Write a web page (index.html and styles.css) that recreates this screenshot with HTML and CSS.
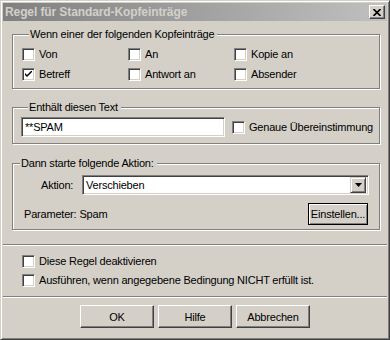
FILE: index.html
```html
<!DOCTYPE html>
<html lang="de">
<head>
<meta charset="utf-8">
<title>Regel für Standard-Kopfeinträge</title>
<link rel="stylesheet" href="styles.css">
</head>
<body>
<div class="window">
  <div class="titlebar">
    <span class="title">Regel für Standard-Kopfeinträge</span>
    <span class="close">
      <svg width="8" height="7" viewBox="0 0 8 7"><path d="M0.5 0 L7.5 7 M7.5 0 L0.5 7" stroke="#000" stroke-width="1.6" fill="none"/></svg>
    </span>
  </div>

  <fieldset class="group g1">
    <legend>Wenn einer der folgenden Kopfeinträge</legend>
    <div class="grid">
      <div class="check"><span class="box"></span>Von</div>
      <div class="check"><span class="box"></span>An</div>
      <div class="check"><span class="box"></span>Kopie an</div>
      <div class="check"><span class="box"><svg width="7" height="7" viewBox="0 0 7 7"><path d="M0 2 L0 4 L2 6 L7 1 L7 -1 L2 4 Z" fill="#000"/></svg></span>Betreff</div>
      <div class="check"><span class="box"></span>Antwort an</div>
      <div class="check"><span class="box"></span>Absender</div>
    </div>
  </fieldset>

  <fieldset class="group g2">
    <legend>Enthält diesen Text</legend>
    <div class="row">
      <div class="textbox">**SPAM</div>
      <div class="check"><span class="box"></span>Genaue Übereinstimmung</div>
    </div>
  </fieldset>

  <fieldset class="group g3">
    <legend>Dann starte folgende Aktion:</legend>
    <div class="row action">
      <span class="lbl-aktion">Aktion:</span>
      <div class="combo">
        <span class="combo-text">Verschieben</span>
        <span class="combo-btn"><svg width="7" height="4" viewBox="0 0 7 4"><path d="M0 0 H7 L3.5 4 Z" fill="#000"/></svg></span>
      </div>
    </div>
    <div class="row param">
      <span class="lbl-param">Parameter:</span>
      <span class="param-val">Spam</span>
      <span class="btn default">Einstellen...</span>
    </div>
  </fieldset>

  <div class="sep sep1"></div>

  <div class="options">
    <div class="check"><span class="box"></span>Diese Regel deaktivieren</div>
    <div class="check"><span class="box"></span>Ausführen, wenn angegebene Bedingung NICHT erfüllt ist.</div>
  </div>

  <div class="sep sep2"></div>

  <div class="buttons">
    <span class="btn">OK</span>
    <span class="btn">Hilfe</span>
    <span class="btn">Abbrechen</span>
  </div>
</div>
</body>
</html>
```

FILE: styles.css
```css
html, body {
  margin: 0;
  padding: 0;
  background: #d4d0c8;
}

.window {
  width: 390px;
  height: 340px;
  box-sizing: border-box;
  background: #d4d0c8;
  border: 1px solid;
  border-color: #d4d0c8 #404040 #404040 #d4d0c8;
  box-shadow: inset 1px 1px 0 #fff, inset -1px -1px 0 #808080;
  padding: 2px;
  display: flex;
  flex-direction: column;
  font-family: "Liberation Sans", Arial, sans-serif;
  font-size: 11px;
  letter-spacing: -0.2px;
  color: #000;
}

.titlebar {
  height: 18px;
  flex: none;
  display: flex;
  align-items: center;
  justify-content: space-between;
  padding: 0 2px;
  background: linear-gradient(to right, #808080, #c0c0c0);
}

.title {
  color: #d4d0c8;
  font-weight: bold;
  font-size: 12px;
  letter-spacing: -0.1px;
}

.close {
  width: 16px;
  height: 14px;
  box-sizing: border-box;
  display: flex;
  align-items: center;
  justify-content: center;
  background: #d4d0c8;
  border: 1px solid;
  border-color: #fff #404040 #404040 #fff;
  box-shadow: inset -1px -1px 0 #808080;
}

.group {
  margin: 0 7px 0 9px;
  padding: 0;
  border: 1px solid #808080;
  box-shadow: 1px 1px 0 #fff, inset 1px 1px 0 #fff;
  min-width: 0;
}

.group legend {
  margin-left: 7px;
  padding: 0 3px 0 1px;
  height: 13px;
  line-height: 13px;
  background: #d4d0c8;
}

.g1 {
  margin-top: 7px;
  padding: 7px 0 7px 9px;
}

.grid {
  display: grid;
  grid-template-columns: 106px 106px 106px;
  row-gap: 7px;
}

.check {
  display: flex;
  align-items: center;
  height: 13px;
  line-height: 13px;
  white-space: nowrap;
}

.box {
  width: 13px;
  height: 13px;
  box-sizing: border-box;
  flex: none;
  margin-right: 4px;
  background: #fff;
  border: 1px solid;
  border-color: #808080 #fff #fff #808080;
  box-shadow: inset 1px 1px 0 #404040, inset -1px -1px 0 #d4d0c8;
  display: flex;
  align-items: center;
  justify-content: center;
}

.g2 {
  margin-top: 12px;
  padding: 3px 0 6px 8px;
}

.row {
  display: flex;
  align-items: center;
}

.textbox {
  width: 204px;
  height: 20px;
  box-sizing: border-box;
  background: #fff;
  border: 1px solid;
  border-color: #808080 #fff #fff #808080;
  box-shadow: inset 1px 1px 0 #404040, inset -1px -1px 0 #d4d0c8;
  padding-left: 3px;
  line-height: 18px;
  margin-right: 7px;
}

.g3 {
  margin-top: 13px;
  padding: 5px 0 4px 0;
}

.action {
  height: 20px;
}

.lbl-aktion {
  margin-left: 28px;
  width: 41px;
}

.combo {
  width: 287px;
  height: 20px;
  box-sizing: border-box;
  background: #fff;
  border: 1px solid;
  border-color: #808080 #fff #fff #808080;
  box-shadow: inset 1px 1px 0 #404040, inset -1px -1px 0 #d4d0c8;
  padding: 2px;
  display: flex;
  align-items: center;
}

.combo-text {
  flex: 1;
  padding-left: 1px;
  line-height: 16px;
}

.combo-btn {
  width: 16px;
  height: 16px;
  box-sizing: border-box;
  background: #d4d0c8;
  border: 1px solid;
  border-color: #d4d0c8 #404040 #404040 #d4d0c8;
  box-shadow: inset 1px 1px 0 #fff, inset -1px -1px 0 #808080;
  display: flex;
  align-items: center;
  justify-content: center;
}

.param {
  margin-top: 8px;
  height: 22px;
}

.lbl-param {
  margin-left: 11px;
  margin-right: 3px;
}

.param-val {
  flex: 1;
}

.btn {
  display: flex;
  align-items: center;
  justify-content: center;
  box-sizing: border-box;
  background: #d4d0c8;
  border: 1px solid;
  border-color: #fff #404040 #404040 #fff;
  box-shadow: inset -1px -1px 0 #808080, inset 1px 1px 0 #d4d0c8;
}

.btn.default {
  width: 60px;
  height: 22px;
  margin-right: 11px;
  border: 1px solid #000;
  box-shadow: inset 1px 1px 0 #fff, inset -1px -1px 0 #808080;
}

.sep {
  height: 1px;
  flex: none;
  background: #808080;
  border-bottom: 1px solid #fff;
}

.sep1 {
  margin-top: 14px;
}

.options {
  display: flex;
  flex-direction: column;
  gap: 6px;
  padding: 9px 0 0 19px;
}

.sep2 {
  margin-top: 9px;
}

.buttons {
  display: flex;
  justify-content: center;
  gap: 4px;
  margin-top: 7px;
}

.buttons .btn {
  width: 74px;
  height: 23px;
}
```
